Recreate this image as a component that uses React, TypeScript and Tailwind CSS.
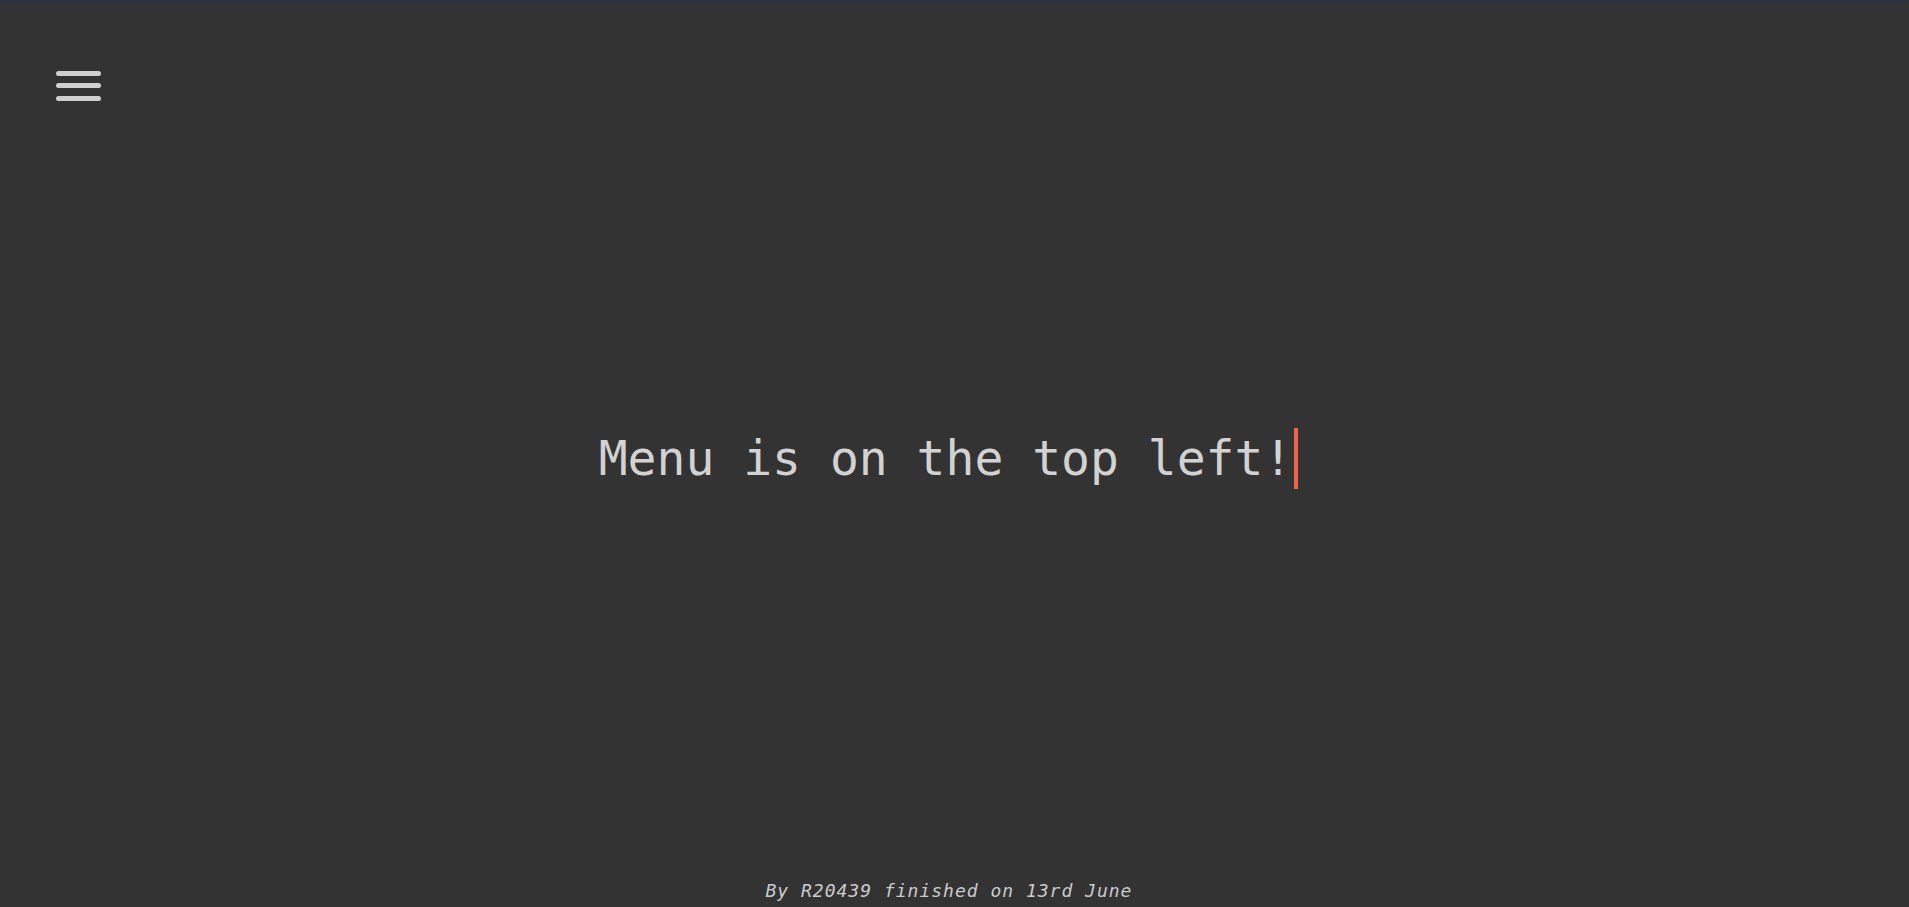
import React from "react";

export default function App() {
  return (
    <div className="relative flex h-[907px] w-full flex-col overflow-hidden bg-[#333333]">
      <div className="h-[3px] w-full shrink-0 bg-[#2d3142]" />
      <div className="flex shrink-0 pl-[56px] pt-[67.5px]">
        <button className="flex w-[45px] flex-col gap-[7.5px]" aria-label="menu">
          <span className="block h-[5px] w-full rounded-full bg-[#cfcfcf]" />
          <span className="block h-[5px] w-full rounded-full bg-[#cfcfcf]" />
          <span className="block h-[5px] w-full rounded-full bg-[#cfcfcf]" />
        </button>
      </div>
      <div className="flex flex-1 items-center justify-center pr-[12px]">
        <div className="mt-[-62px] flex items-stretch">
          <span
            className="whitespace-pre text-[48px] leading-[61px] text-[#d2d2d2]"
            style={{ fontFamily: '"DejaVu Sans Mono", monospace' }}
          >
            Menu is on the top left!
          </span>
          <span className="ml-[2px] w-[4px] bg-[#f2644a]" />
        </div>
      </div>
      <div className="flex shrink-0 justify-center pb-[4px] pl-[1px] pr-[12px]">
        <span
          className="whitespace-pre text-[18px] italic leading-[24px] tracking-[1px] text-[#cbcbcb]"
          style={{ fontFamily: '"DejaVu Sans Mono", monospace' }}
        >
          By R20439 finished on 13rd June
        </span>
      </div>
    </div>
  );
}
